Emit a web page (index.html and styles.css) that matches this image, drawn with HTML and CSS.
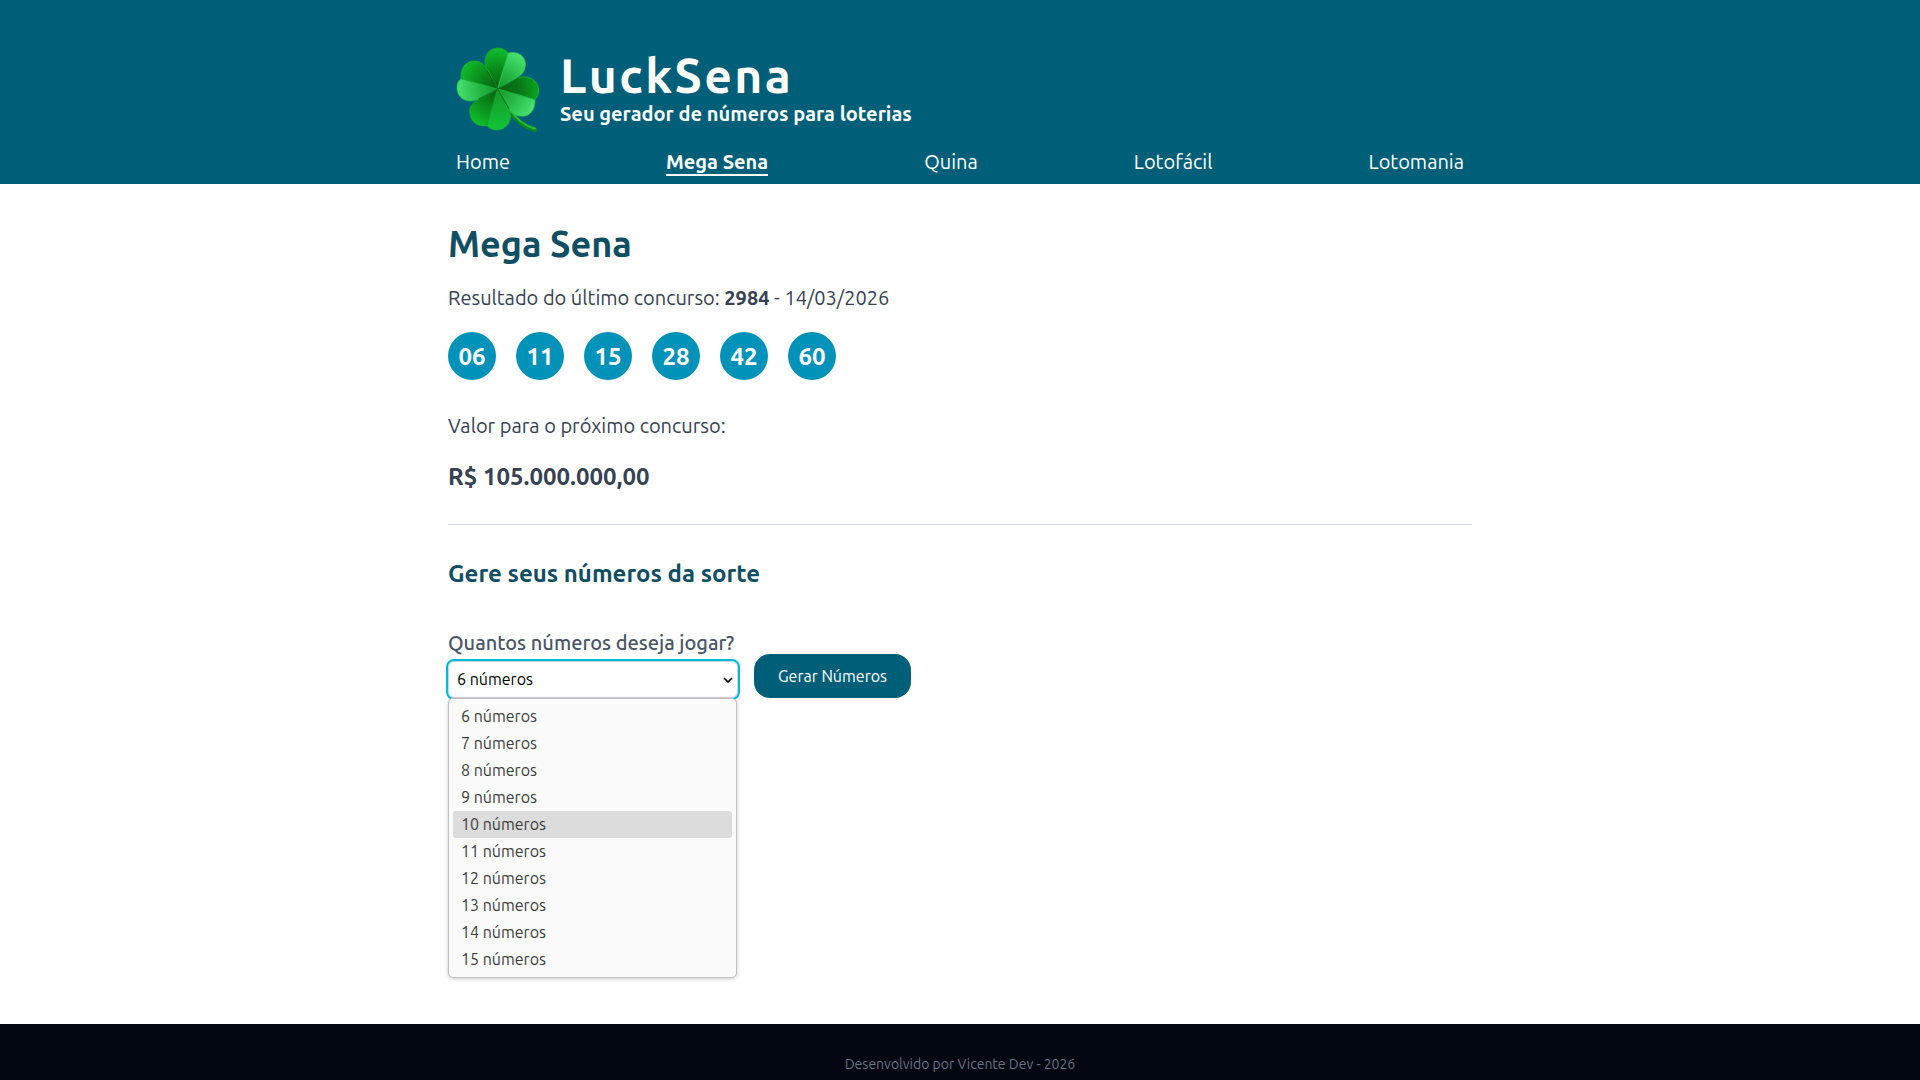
FILE: index.html
```html
<!DOCTYPE html>
<html lang="pt-BR">
<head>
<meta charset="utf-8">
<meta name="viewport" content="width=device-width, initial-scale=1">
<title>LuckSena - Mega Sena</title>
<link rel="stylesheet" href="styles.css">
</head>
<body>
<header class="site-header">
  <div class="container header-inner">
    <div class="brand">
      <svg class="brand-logo" viewBox="49 50 252 258" aria-hidden="true">
        <defs>
          <radialGradient id="deep" gradientUnits="userSpaceOnUse" cx="174" cy="176" r="125">
            <stop offset="0" stop-color="#08600f"/><stop offset=".5" stop-color="#0b8c1c"/><stop offset="1" stop-color="#10bf2d"/>
          </radialGradient>
          <radialGradient id="dark" gradientUnits="userSpaceOnUse" cx="174" cy="176" r="125">
            <stop offset="0" stop-color="#086011"/><stop offset=".5" stop-color="#097517"/><stop offset="1" stop-color="#0ba61f"/>
          </radialGradient>
          <radialGradient id="light" gradientUnits="userSpaceOnUse" cx="174" cy="176" r="125">
            <stop offset="0" stop-color="#16952a"/><stop offset=".5" stop-color="#28bb48"/><stop offset="1" stop-color="#49e474"/>
          </radialGradient>
          <radialGradient id="mid" gradientUnits="userSpaceOnUse" cx="174" cy="176" r="125">
            <stop offset="0" stop-color="#159329"/><stop offset="1" stop-color="#12c638"/>
          </radialGradient>
        </defs>
        <path d="M208 236Q235 284 286 298" fill="none" stroke="#0a8620" stroke-width="14" stroke-linecap="round"/>
        <path d="M212 238Q238 281 286 295" fill="none" stroke="#27b744" stroke-width="6" stroke-linecap="round"/>
        <g stroke-width="2" stroke-linejoin="round">
          <path fill="url(#deep)" stroke="#13ad2c" d="M174 176L142 121C127 88 141 53 176 53Q195 54 206 68Z"/>
          <path fill="url(#light)" stroke="#31cd57" d="M174 176L206 68C231 61 257 75 257 102C257 123 246 134 229 144Z"/>
          <path fill="url(#dark)" stroke="#20b735" d="M174 176L236 143C264 132 297 148 297 181Q297 199 286 208Z"/>
          <path fill="url(#light)" stroke="#1cb93b" d="M174 176L286 208C288 236 272 258 248 258C226 258 216 249 207 234Z"/>
          <path fill="url(#mid)" stroke="#14b131" d="M174 176L207 233C223 263 205 298 172 299Q153 299 142 286Z"/>
          <path fill="url(#deep)" stroke="#14a92c" d="M174 176L142 286C112 291 91 272 90 245C89 225 102 215 119 205Z"/>
          <path fill="url(#light)" stroke="#2ac74a" d="M174 176L116 206C85 222 52 204 52 172Q52 154 64 145Z"/>
          <path fill="url(#deep)" stroke="#15b731" d="M174 176L64 145C61 113 79 92 104 92C126 92 136 106 145 121Z"/>
        </g>
        <path d="M174 176L142 121M174 176L236 143M174 176L207 234M174 176L116 206" fill="none" stroke="#07570f" stroke-width="2"/>
      </svg>
      <div class="brand-text">
        <span class="brand-name">LuckSena</span>
        <span class="brand-tagline">Seu gerador de números para loterias</span>
      </div>
    </div>
    <nav class="main-nav">
      <a class="nav-link" href="#">Home</a>
      <a class="nav-link active" href="#" aria-current="page">Mega Sena</a>
      <a class="nav-link" href="#">Quina</a>
      <a class="nav-link" href="#">Lotofácil</a>
      <a class="nav-link" href="#">Lotomania</a>
    </nav>
  </div>
</header>

<main class="container content">
  <h1 class="page-title">Mega Sena</h1>
  <p class="text">Resultado do último concurso: <strong>2984</strong> - 14/03/2026</p>
  <ul class="balls">
    <li class="ball">06</li>
    <li class="ball">11</li>
    <li class="ball">15</li>
    <li class="ball">28</li>
    <li class="ball">42</li>
    <li class="ball">60</li>
  </ul>
  <p class="text next-label">Valor para o próximo concurso:</p>
  <p class="prize">R$ 105.000.000,00</p>
  <hr class="divider">
  <h2 class="section-title">Gere seus números da sorte</h2>
  <form class="generator">
    <div class="field">
      <label class="field-label" for="amount">Quantos números deseja jogar?</label>
      <div class="select-wrap">
        <select class="select" id="amount">
          <option>6 números</option>
          <option>7 números</option>
          <option>8 números</option>
          <option>9 números</option>
          <option>10 números</option>
          <option>11 números</option>
          <option>12 números</option>
          <option>13 números</option>
          <option>14 números</option>
          <option>15 números</option>
        </select>
        <svg class="select-arrow" viewBox="0 0 10 6" aria-hidden="true"><path d="M1 1L5 5L9 1" fill="none" stroke="#000" stroke-width="1.7"/></svg>
        <ul class="options" role="listbox" aria-label="Quantidade de números">
          <li class="option" role="option">6 números</li>
          <li class="option" role="option">7 números</li>
          <li class="option" role="option">8 números</li>
          <li class="option" role="option">9 números</li>
          <li class="option hovered" role="option">10 números</li>
          <li class="option" role="option">11 números</li>
          <li class="option" role="option">12 números</li>
          <li class="option" role="option">13 números</li>
          <li class="option" role="option">14 números</li>
          <li class="option" role="option">15 números</li>
        </ul>
      </div>
    </div>
    <button class="button" type="button">Gerar Números</button>
  </form>
</main>

<footer class="site-footer">Desenvolvido por Vicente Dev - 2026</footer>
</body>
</html>
```
FILE: styles.css
```css
* {
  box-sizing: border-box;
  margin: 0;
  padding: 0;
}

body {
  display: flex;
  flex-direction: column;
  min-height: 100vh;
  background: #fff;
  color: #364153;
  font-family: Ubuntu, "Open Sans", "Noto Sans", sans-serif;
  font-size: 20px;
  font-weight: 400;
  line-height: 28px;
}

ul {
  list-style: none;
}

.container {
  width: 100%;
  max-width: 1024px;
  margin: 0 auto;
}

/* Header */
.site-header {
  background: #005f78;
  color: #fff;
}

.header-inner {
  padding: 47px 8px 8px;
}

.brand {
  display: flex;
  gap: 20px;
}

.brand-logo {
  width: 84px;
  height: 86px;
}

.brand-text {
  display: flex;
  flex-direction: column;
  padding-top: 4px;
}

.brand-name {
  font-size: 48px;
  font-weight: 700;
  line-height: 48px;
  letter-spacing: 0.05em;
}

.brand-tagline {
  font-weight: 700;
  line-height: 30px;
}

.main-nav {
  display: flex;
  justify-content: space-between;
  margin-top: 17px;
}

.nav-link {
  color: #fff;
  text-decoration: none;
  border-bottom: 2px solid transparent;
  line-height: 24px;
}

.nav-link.active {
  font-weight: 700;
  border-color: #fff;
}

/* Content */
.content {
  flex: 1;
  padding: 40px 0;
}

.page-title {
  margin-bottom: 20px;
  color: #104e64;
  font-size: 36px;
  font-weight: 700;
  line-height: 40px;
}

strong {
  font-weight: 700;
}

.balls {
  display: flex;
  gap: 20px;
  margin: 20px 0 32px;
}

.ball {
  width: 48px;
  height: 48px;
  border-radius: 50%;
  background: #0092b8;
  color: #fff;
  font-size: 24px;
  font-weight: 700;
  line-height: 50px;
  text-align: center;
}

.prize {
  margin-top: 20px;
  font-size: 24px;
  font-weight: 700;
  line-height: 34px;
}

.divider {
  margin: 30px 0 32px;
  border: 0;
  border-top: 1px solid #d1d5dc;
}

.section-title {
  color: #104e64;
  font-size: 24px;
  font-weight: 700;
  line-height: 34px;
}

.generator {
  display: flex;
  align-items: flex-end;
  gap: 16px;
  margin-top: 38px;
}

.field {
  display: flex;
  flex-direction: column;
  gap: 4px;
  min-width: 290px;
}

.field-label {
  color: #4a5565;
  font-weight: 500;
}

.select-wrap {
  display: flex;
  position: relative;
}

.select {
  appearance: none;
  width: 100%;
  height: 37px;
  padding: 0 28px 2px 8px;
  border: 1px solid #d1d5dc;
  border-radius: 6px;
  outline: 2px solid #00b8db;
  background: #fff;
  color: #000;
  font-family: inherit;
  font-size: 16px;
  font-weight: 400;
}

.select-arrow {
  position: absolute;
  top: 16px;
  right: 5px;
  width: 10px;
  height: 6px;
  pointer-events: none;
}

.options {
  position: absolute;
  top: 100%;
  left: 0;
  right: 1px;
  padding: 4px;
  border: 1px solid #c0c0c0;
  border-radius: 5px;
  background: #fafafa;
  box-shadow: 0 1px 4px rgb(0 0 0 / 20%);
  color: #3d3d3d;
  font-size: 16px;
  font-weight: 400;
  line-height: 27px;
}

.option {
  padding: 0 8px;
  border-radius: 3px;
}

.option.hovered {
  background: #dcdcdc;
}

.button {
  padding: 10px 24px;
  border: 0;
  border-radius: 16px;
  background: #005f78;
  color: #fff;
  font-family: inherit;
  font-size: 16px;
  font-weight: 400;
  line-height: 24px;
}

/* Footer */
.site-footer {
  padding: 30px 16px 6px;
  background: #030712;
  color: #6a7282;
  font-size: 14px;
  line-height: 20px;
  text-align: center;
}
```
